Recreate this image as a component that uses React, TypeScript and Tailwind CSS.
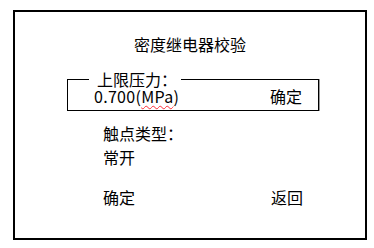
import React from 'react';

const font = { fontFamily: '"Noto Sans CJK SC", "Noto Sans", sans-serif' };

const App: React.FC = () => {
  return (
    <div className="w-[374px] h-[248px] bg-white pt-[10px] pl-[13px] text-black text-[16px] leading-[16px]" style={font}>
      <div className="w-[354px] h-[230px] border-2 border-black flex flex-col">
        <h1 className="mt-[24px] text-center text-[16px] leading-[16px] font-normal">密度继电器校验</h1>

        <fieldset className="mt-[20px] ml-[52px] w-[252px] border border-black shadow-[1px_0_0_#9a9a9a] pl-[26px] pr-[16px] pb-[6px]">
          <legend className="ml-[-5px] pl-[8px] pr-[4px] leading-[15px]">上限压力：</legend>
          <div className="mt-[1px] flex justify-between items-center leading-[16px]">
            <span className="tracking-[0.3px]">0.700(<span className="underline decoration-wavy decoration-red-500 decoration-1 underline-offset-2">MPa</span>)</span>
            <span>确定</span>
          </div>
        </fieldset>

        <div className="ml-[88px] mt-[14px] flex flex-col">
          <span>触点类型：</span>
          <span className="mt-[8px]">常开</span>
          <div className="mt-[24px] flex w-[200px] justify-between">
            <span>确定</span>
            <span>返回</span>
          </div>
        </div>
      </div>
    </div>
  );
};

export default App;
